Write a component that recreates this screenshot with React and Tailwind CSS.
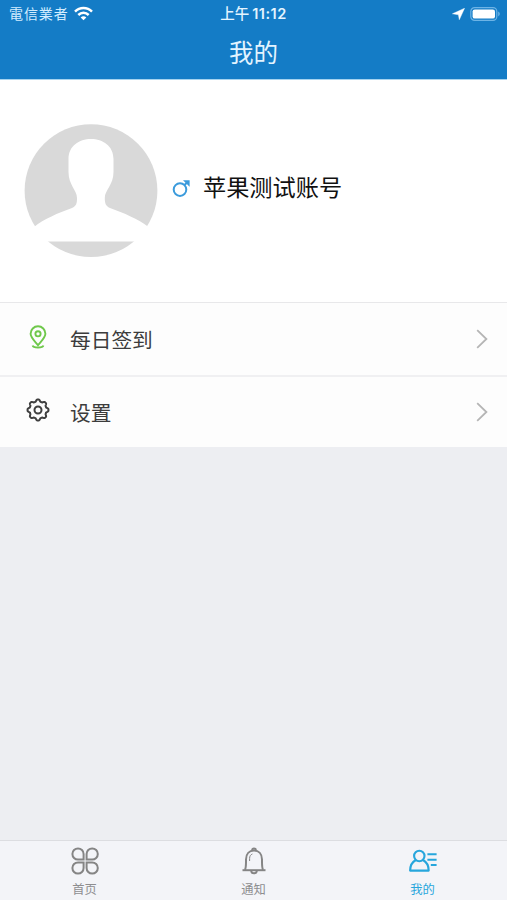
import React from 'react';

// Gear outline: eight rounded teeth around the centre
const gearPoints = Array.from({ length: 160 }, (_, i) => {
  const t = (i / 160) * Math.PI * 2;
  const wave = Math.max(-1, Math.min(1, Math.cos(8 * t) * 1.5));
  const r = 9.5 + wave * 0.95;
  return `${(12 + r * Math.sin(t)).toFixed(2)},${(12 - r * Math.cos(t)).toFixed(2)}`;
}).join(' ');

function StatusBar() {
  return (
    <div className="grid grid-cols-3 items-center h-7 pl-[9px] pr-[6px] text-[14px] leading-7">
      <div className="flex items-center gap-[6px]">
        <span className="tracking-[0.9px] text-[#d3edff]">電信業者</span>
        <svg width="19" height="15" viewBox="0 0 19 15" className="-ml-px -mt-[2px]" fill="none" stroke="white" strokeWidth="2.5">
          <path d="M1 5.6C5.8 .8 13.2 .8 18 5.6" />
          <path d="M4.3 9C7.3 6.1 11.7 6.1 14.7 9" />
          <path d="M6.7 11.4C8.3 9.9 10.7 9.9 12.3 11.4L9.5 14.2Z" fill="white" stroke="none" />
        </svg>
      </div>
      <div className="-ml-[3px] text-center whitespace-nowrap font-medium text-[#e3f4ff]">
        <span className="text-[14.5px]">上午</span>
        <span className="ml-[3px] font-[Inter] text-[14.5px] font-semibold tracking-[0.5px]">11:12</span>
      </div>
      <div className="flex items-center justify-end gap-[5px]">
        <svg width="13" height="12" viewBox="0 0 13 12" className="-mt-px" fill="white">
          <path d="M12.6 .2L7.3 11.8L6.4 6.8L.4 5.8Z" stroke="white" strokeWidth=".4" strokeLinejoin="round" />
        </svg>
        <svg width="31" height="14" viewBox="0 0 31 14" className="-mt-px">
          <rect x="0.8" y="0.6" width="26" height="12.8" rx="3.8" fill="none" stroke="#6db4e6" strokeWidth="1.2" />
          <rect x="2.6" y="2.4" width="22.4" height="9.2" rx="2.2" fill="white" />
          <path d="M28.2 4.6C30.3 5.6 30.3 8.4 28.2 9.4Z" fill="#6db4e6" />
        </svg>
      </div>
    </div>
  );
}

function Avatar() {
  return (
    <svg width="134" height="134" viewBox="0 0 134 134" className="shrink-0">
      <circle cx="67" cy="66.7" r="66.4" fill="#d9d9d9" />
      <path
        d="M67 15C79 15 89.5 22 89.5 35V48C89.5 61 80.8 66 80.8 74C80.8 79 81.5 82 86 84C100 89 114 95 124.5 103L134 110V117.6H0V110L10 103C20 95 34 89 48 84C52.5 82 53 79 53 74C53 66 44.5 61 44.5 48V35C44.5 22 55 15 67 15Z"
        fill="white"
      />
    </svg>
  );
}

function PinIcon() {
  return (
    <svg width="24" height="24" viewBox="0 0 24 24" fill="none" stroke="#6fc84b" strokeWidth="1.9">
      <path d="M12 20.2C8.6 16 4.6 12.4 4.6 8.7A7.4 7.4 0 0 1 19.4 8.7C19.4 12.4 15.4 16 12 20.2Z" />
      <circle cx="12" cy="8.8" r="2.6" />
      <path d="M6.6 20.4C7.3 23.1 16.7 23.1 17.4 20.4" />
    </svg>
  );
}

function GearIcon() {
  return (
    <svg width="24" height="24" viewBox="0 0 24 24" fill="none" stroke="#404040" strokeWidth="2" strokeLinejoin="round">
      <polygon points={gearPoints} />
      <circle cx="12" cy="12" r="3.5" />
    </svg>
  );
}

function MenuRow({ icon, label, className }) {
  return (
    <button className={`flex items-center w-full bg-[#fdfdfd] pl-[26px] pr-[19px] text-left ${className}`}>
      <span className="-mt-1">{icon}</span>
      <span className="ml-5 mt-[3px] flex-1 text-[20.7px] leading-8 text-[#3c3c3c]">{label}</span>
      <svg width="12" height="20" viewBox="0 0 12 20" fill="none" stroke="#b5b5b5" strokeWidth="1.8">
        <path d="M1.2 1.2L10.4 10L1.2 18.8" />
      </svg>
    </button>
  );
}

function HomeIcon() {
  return (
    <svg width="28" height="28" viewBox="0 0 28 28" fill="none" stroke="#858585" strokeWidth="2">
      <path d="M12.6 12.6H7A5.6 5.6 0 1 1 12.6 7Z" />
      <path d="M15.6 12.6H21.2A5.6 5.6 0 1 0 15.6 7Z" />
      <path d="M12.6 15.4H7A5.6 5.6 0 1 0 12.6 21Z" />
      <path d="M15.6 15.4H21.2A5.6 5.6 0 1 1 15.6 21Z" />
    </svg>
  );
}

function BellIcon() {
  return (
    <svg width="28" height="28" viewBox="0 0 28 28" fill="none" stroke="#858585" strokeWidth="2">
      <path d="M2.5 23.2H25.5" />
      <path d="M4.9 22.8C6.2 21 6 18 6 12.5C6 7 9.3 3.5 14 3.5C18.7 3.5 22 7 22 12.5C22 18 21.8 21 23.1 22.8" />
      <path d="M12.2 3A1.8 1.6 0 0 1 15.8 3" />
      <path d="M11.2 23.7C11.4 27.2 16.6 27.2 16.8 23.7" />
      <path d="M9.6 14V11.5C9.6 9 10.6 7.7 12.4 7" strokeWidth="1" />
    </svg>
  );
}

function ProfileIcon() {
  return (
    <svg width="28" height="28" viewBox="0 0 28 28" fill="none" stroke="#27a6dc" strokeWidth="2.1">
      <circle cx="10.3" cy="9" r="5.2" />
      <path d="M6.8 13C3.5 14.8 1.2 18 1.1 23.6H19.7C19.6 18 17.3 14.8 14 13" strokeLinejoin="round" />
      <path d="M18.4 7.3H27.6M18.4 12.7H27.6M21.8 18H27.6" />
    </svg>
  );
}

const tabs = [
  { label: '首页', icon: <HomeIcon />, color: 'text-[#8e8e90]' },
  { label: '通知', icon: <BellIcon />, color: 'text-[#8e8e90]' },
  { label: '我的', icon: <ProfileIcon />, color: 'text-[#27a6dc]' },
];

export default function App() {
  return (
    <div className="flex flex-col h-screen bg-[#edeef2] font-['Liberation_Sans','Noto_Sans_CJK_SC',sans-serif]">
      <header className="h-[79px] shrink-0 bg-[#147cc6] text-[#e3f4ff]">
        <StatusBar />
        <h1 className="pt-[2px] text-center text-[24.5px] leading-[48px]">我的</h1>
      </header>

      {/* Profile */}
      <section className="flex items-center h-[224px] shrink-0 bg-white border-t border-t-[#a5d3ef] border-b border-b-[#e8e8ea] pl-6">
        <Avatar />
        <svg width="18" height="18" viewBox="0 0 18 18" className="ml-[14px] -mt-[6px]" fill="none" stroke="#3b9bdc" strokeWidth="2">
          <circle cx="8" cy="10.6" r="6.3" />
          <path d="M12.3 6.2L15 3.5" />
          <path d="M11 1.2H17.6V7.8Z" fill="#3b9bdc" stroke="none" />
        </svg>
        <span className="ml-[13px] -mt-[7px] text-[23.2px] leading-8 text-[#111]">苹果测试账号</span>
      </section>

      {/* Menu */}
      <nav className="shrink-0">
        <MenuRow icon={<PinIcon />} label="每日签到" className="h-[72px]" />
        <div className="h-[2px] bg-[#f0f0f2]" />
        <MenuRow icon={<GearIcon />} label="设置" className="h-[70px]" />
      </nav>

      <footer className="mt-auto grid grid-cols-3 h-[60px] bg-[#f3f4f8] border-t border-[#dcdde1]">
        {tabs.map(({ label, icon, color }) => (
          <button key={label} className={`flex flex-col items-center pt-[6px] ${color}`}>
            {icon}
            <span className="mt-[6px] text-[12.3px] leading-[18px]">{label}</span>
          </button>
        ))}
      </footer>
    </div>
  );
}
